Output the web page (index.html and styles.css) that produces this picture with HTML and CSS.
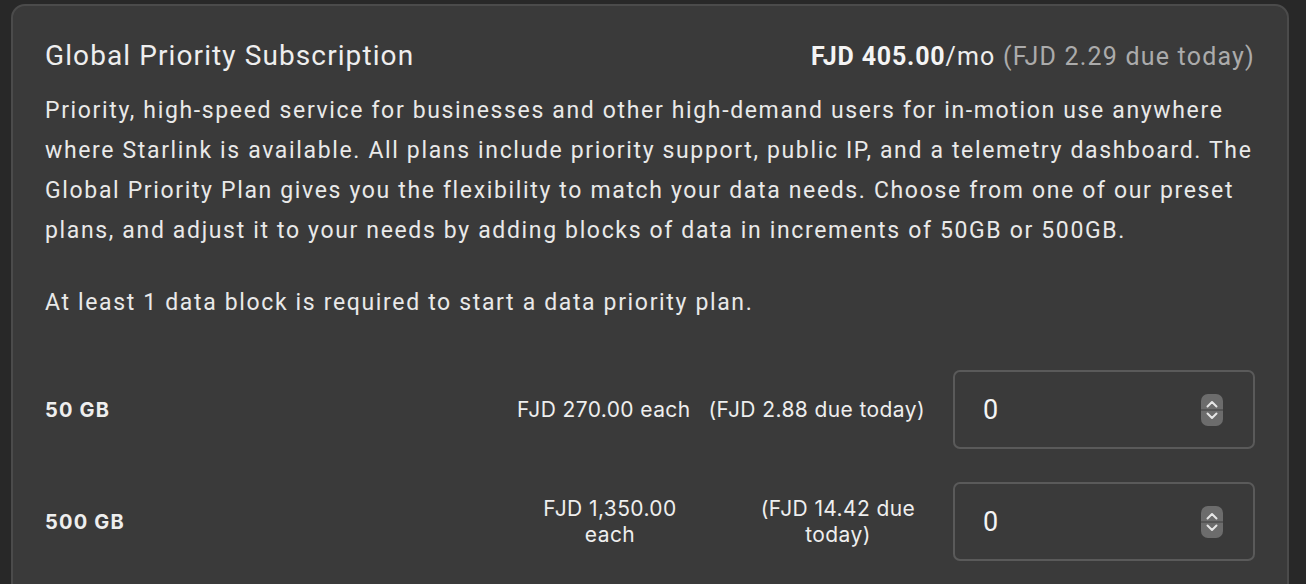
FILE: index.html
```html
<!DOCTYPE html>
<html lang="en">
<head>
<meta charset="utf-8">
<title>Global Priority Subscription</title>
<link rel="stylesheet" href="styles.css">
</head>
<body>
<div class="card">
  <div class="head">
    <div class="title">Global Priority Subscription</div>
    <div class="price"><strong>FJD 405.00</strong>/mo <span class="due">(FJD 2.29 due today)</span></div>
  </div>
  <p class="desc">Priority, high-speed service for businesses and other high-demand users for in-motion use anywhere where Starlink is available. All plans include priority support, public IP, and a telemetry dashboard. The Global Priority Plan gives you the flexibility to match your data needs. Choose from one of our preset plans, and adjust it to your needs by adding blocks of data in increments of 50GB or 500GB.</p>
  <p class="desc note">At least 1 data block is required to start a data priority plan.</p>

  <div class="row">
    <div class="label">50 GB</div>
    <div class="each">FJD 270.00 each</div>
    <div class="today">(FJD 2.88 due today)</div>
    <div class="field">
      <span class="value">0</span>
      <span class="spin">
        <svg width="22" height="32" viewBox="0 0 22 32"><path d="M6.5 12.5 L11 8 L15.5 12.5" fill="none" stroke="#e6e6e6" stroke-width="2" stroke-linecap="round" stroke-linejoin="round"/><path d="M6.5 19.5 L11 24 L15.5 19.5" fill="none" stroke="#e6e6e6" stroke-width="2" stroke-linecap="round" stroke-linejoin="round"/></svg>
      </span>
    </div>
  </div>

  <div class="row row-wrap">
    <div class="label">500 GB</div>
    <div class="each">FJD 1,350.00 each</div>
    <div class="today">(FJD 14.42 due today)</div>
    <div class="field">
      <span class="value">0</span>
      <span class="spin">
        <svg width="22" height="32" viewBox="0 0 22 32"><path d="M6.5 12.5 L11 8 L15.5 12.5" fill="none" stroke="#e6e6e6" stroke-width="2" stroke-linecap="round" stroke-linejoin="round"/><path d="M6.5 19.5 L11 24 L15.5 19.5" fill="none" stroke="#e6e6e6" stroke-width="2" stroke-linecap="round" stroke-linejoin="round"/></svg>
      </span>
    </div>
  </div>
</div>
</body>
</html>
```
FILE: styles.css
```css
html, body {
  margin: 0;
  padding: 0;
  background: #282828;
  overflow: hidden;
}
body {
  font-family: Roboto, "Liberation Sans", sans-serif;
  color: #ececec;
}
.card {
  box-sizing: border-box;
  width: 1278px;
  min-height: 620px;
  margin: 4px 0 0 11px;
  padding: 32px 32px 0;
  background: #3a3a3a;
  border: 2px solid #4b4b4b;
  border-radius: 14px;
}
.head {
  display: flex;
  justify-content: space-between;
  align-items: baseline;
  line-height: 36px;
}
.title {
  font-size: 28px;
  letter-spacing: 1.1px;
  color: #eeeeee;
}
.price {
  font-size: 25px;
  letter-spacing: 1.2px;
  color: #eeeeee;
}
.price strong {
  font-weight: 700;
  letter-spacing: 0.8px;
  color: #f4f4f4;
}
.due {
  color: #ababab;
}
.desc {
  margin: 16px 0 0;
  font-size: 23px;
  line-height: 40px;
  letter-spacing: 1.65px;
  color: #e9e9e9;
}
.desc.note {
  margin-top: 32px;
}
.row {
  display: flex;
  align-items: center;
  margin-top: 47px;
  font-family: Inter, Roboto, sans-serif;
  font-size: 21px;
  letter-spacing: 0.4px;
  color: #eeeeee;
}
.row + .row {
  margin-top: 33px;
}
.label {
  flex: 1;
  font-weight: 700;
  font-size: 20px;
  letter-spacing: 1.2px;
}
.each, .today {
  text-align: center;
  line-height: 26px;
}
.today {
  margin-left: 18px;
}
.field {
  box-sizing: border-box;
  width: 302px;
  height: 79px;
  margin-left: 28px;
  display: flex;
  align-items: center;
  justify-content: space-between;
  padding: 0 30px 0 28px;
  border: 2px solid #5a5a5a;
  border-radius: 7px;
}
.value {
  font-family: Roboto, sans-serif;
  font-size: 27px;
  color: #f4f4f4;
}
.spin {
  display: block;
  width: 22px;
  height: 32px;
  border-radius: 7px;
  background: linear-gradient(#6c6c6c 0 15px, #555555 15px 17px, #6c6c6c 17px);
}
.spin svg {
  display: block;
}
.row-wrap .each {
  width: 160px;
}
.row-wrap .today {
  width: 174px;
  margin-left: 61px;
}
```
